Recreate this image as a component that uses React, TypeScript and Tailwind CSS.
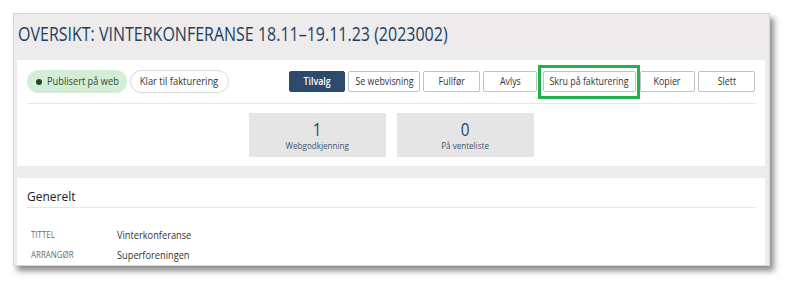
const buttons = [
  { label: "Tilvalg", w: "w-[56px]", primary: true },
  { label: "Se webvisning", w: "w-[72px]" },
  { label: "Fullfør", w: "w-[57px]" },
  { label: "Avlys", w: "w-[54px]" },
  { label: "Skru på fakturering", w: "w-[93px]", marked: true },
  { label: "Kopier", w: "w-[55px]" },
  { label: "Slett", w: "w-[57px]" },
];

// the screenshot is squeezed horizontally, so text gets a scale-x
function ActionButton(props: { label: string; w: string; primary?: boolean; marked?: boolean }) {
  const cls = props.primary
    ? "bg-[#2c4a6b] border-[#2c4a6b] text-white font-semibold"
    : "bg-white border-[#bcc3cb] text-[#333]";
  return (
    <div className={`relative ${props.marked ? "ml-[3px] mr-[1px]" : ""}`}>
      <button className={`flex h-[21px] ${props.w} items-center justify-center whitespace-nowrap rounded-[2px] border text-[10.5px] leading-none ${cls}`}>
        <span className="inline-block scale-x-[0.84]">{props.label}</span>
      </button>
      {props.marked && (
        <div className="absolute -left-[5px] -top-[6px] -right-[4px] -bottom-[7px] border-[3px] border-[#21b24b]" />
      )}
    </div>
  );
}

function Stat(props: { value: string; label: string }) {
  return (
    <div className="flex h-[44px] w-[137px] flex-col items-center justify-center bg-[#e5e5e5]">
      <span className="inline-block scale-x-[0.85] text-[18px] leading-[20px] text-[#1f4466]">{props.value}</span>
      <span className="inline-block scale-x-[0.85] whitespace-nowrap text-[9.5px] leading-[13px] text-[#3f5468]">{props.label}</span>
    </div>
  );
}

function Field(props: { label: string; value: string }) {
  return (
    <div className="flex h-[20px] items-center">
      <span className="w-[90px] shrink-0 pl-[4px] text-[9px] uppercase text-[#6b6b6b]">
        <span className="inline-block origin-left scale-x-[0.88]">{props.label}</span>
      </span>
      <span className="inline-block origin-left scale-x-[0.84] whitespace-nowrap text-[11px] text-[#333]">{props.value}</span>
    </div>
  );
}

export default function App() {
  return (
    <div className="h-[293px] w-[798px] overflow-hidden bg-white pl-[13px] pt-[13px] font-['Open_Sans',sans-serif]">
      <div className="h-[253px] w-[757px] overflow-hidden border border-[#d6d6d6] bg-[#edebeb] shadow-[4px_5px_6px_rgba(0,0,0,0.45)]">
        <h1 className="h-[46px] whitespace-nowrap pl-[4px] pt-[8px] text-[20px] leading-[24px] text-[#1e3f5f]">
          <span className="inline-block origin-left scale-x-[0.8]">OVERSIKT: VINTERKONFERANSE 18.11–19.11.23 (2023002)</span>
        </h1>

        <div className="ml-[3px] mr-[4px] bg-white px-[10px] pt-[10px] pb-[9px]">
          <div className="flex items-center justify-between">
            <div className="flex items-center gap-[3px]">
              <span className="flex h-[23px] w-[100px] items-center whitespace-nowrap rounded-full bg-[#d4edd7] pl-[9px] text-[10.5px] text-[#2f4a33]">
                <span className="h-[6px] w-[6px] shrink-0 rounded-full bg-[#1d4a23]" />
                <span className="ml-[5px] inline-block origin-left scale-x-[0.88]">Publisert på web</span>
              </span>
              <span className="flex h-[23px] w-[99px] items-center justify-center whitespace-nowrap rounded-full border border-[#d9d9d9] text-[10.5px] text-[#333]">
                <span className="inline-block scale-x-[0.89]">Klar til fakturering</span>
              </span>
            </div>
            <div className="flex items-center gap-[3px]">
              {buttons.map((b) => (
                <ActionButton key={b.label} {...b} />
              ))}
            </div>
          </div>
          <div className="mt-[10px] h-px bg-[#e6e6e6]" />
          <div className="mt-[9px] flex justify-center gap-[11px]">
            <Stat value="1" label="Webgodkjenning" />
            <Stat value="0" label="På venteliste" />
          </div>
        </div>

        <div className="ml-[3px] mr-[4px] mt-[12px] h-[100px] bg-white px-[10px]">
          <div className="flex h-[29px] items-end pb-[1px] text-[13.5px] text-[#222]">
            <span className="inline-block origin-left scale-x-[0.89]">Generelt</span>
          </div>
          <div className="h-px bg-[#e6e6e6]" />
          <div className="pt-[17px]">
            <Field label="Tittel" value="Vinterkonferanse" />
            <Field label="Arrangør" value="Superforeningen" />
          </div>
        </div>
      </div>
    </div>
  );
}
